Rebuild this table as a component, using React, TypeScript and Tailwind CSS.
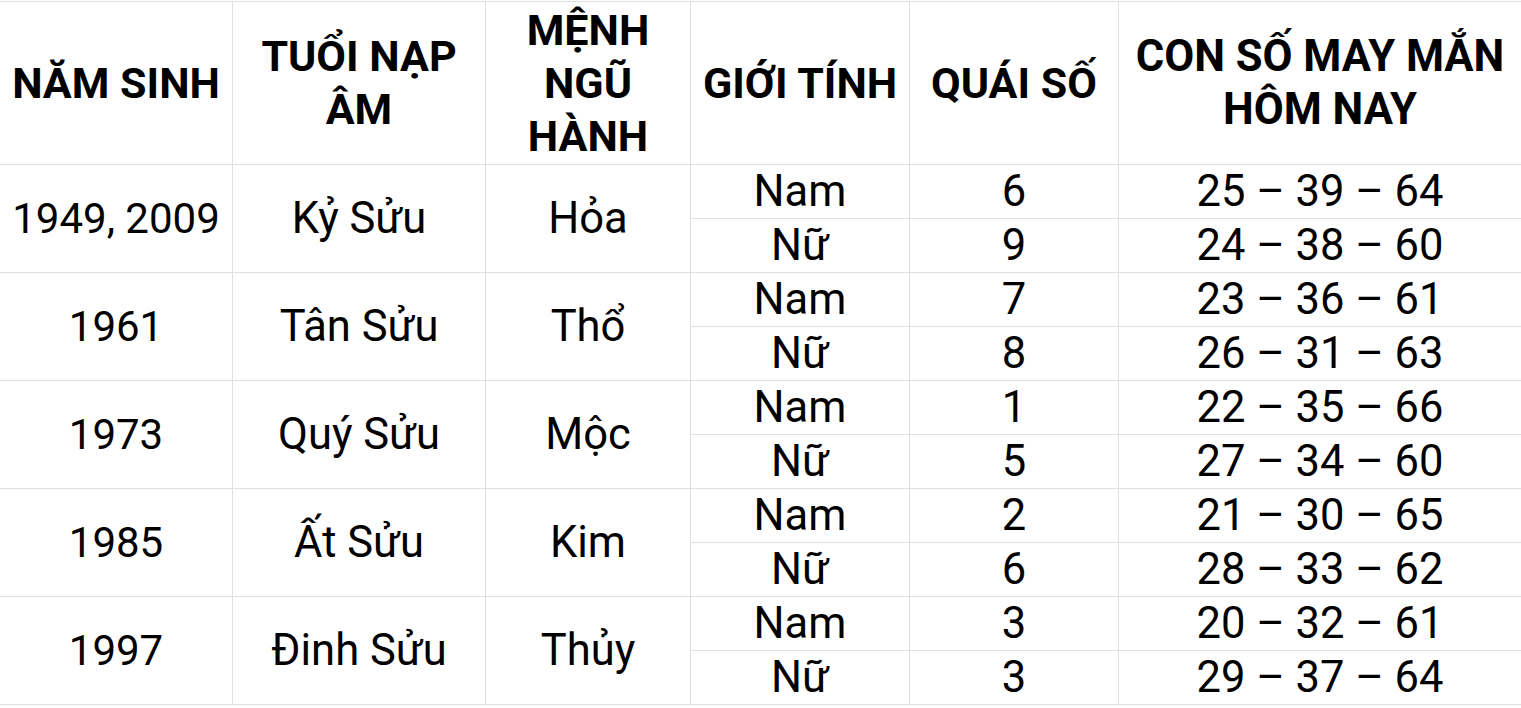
import React from "react";

const rows = [
  { year: "1949, 2009", tuoi: "Kỷ Sửu", menh: "Hỏa", sub: [["Nam", "6", "25 – 39 – 64"], ["Nữ", "9", "24 – 38 – 60"]] },
  { year: "1961", tuoi: "Tân Sửu", menh: "Thổ", sub: [["Nam", "7", "23 – 36 – 61"], ["Nữ", "8", "26 – 31 – 63"]] },
  { year: "1973", tuoi: "Quý Sửu", menh: "Mộc", sub: [["Nam", "1", "22 – 35 – 66"], ["Nữ", "5", "27 – 34 – 60"]] },
  { year: "1985", tuoi: "Ất Sửu", menh: "Kim", sub: [["Nam", "2", "21 – 30 – 65"], ["Nữ", "6", "28 – 33 – 62"]] },
  { year: "1997", tuoi: "Đinh Sửu", menh: "Thủy", sub: [["Nam", "3", "20 – 32 – 61"], ["Nữ", "3", "29 – 37 – 64"]] },
];

const headBase = "flex items-center justify-center text-center h-[163px] border-b border-[#e0e0e0] font-bold leading-[53px]";
const head = `${headBase} text-[43px]`;
const spanBase = "row-span-2 flex items-center justify-center text-center border-b border-[#e0e0e0] whitespace-nowrap";
const span = `${spanBase} text-[43.5px]`;
const sub = "flex items-center justify-center text-center h-[54px] border-b border-[#e0e0e0] text-[43.5px] whitespace-nowrap";

export default function App() {
  return (
    <div className="w-[1521px] h-[708px] bg-white overflow-hidden pt-px text-black" style={{ fontFamily: "Roboto, 'Noto Sans', sans-serif" }}>
      <div className="grid grid-cols-[233px_253px_205px_219px_209px_402px] border-t border-[#e0e0e0]">
        <div className={`${head} border-r`}>NĂM SINH</div>
        <div className={`${head} border-r`}>TUỔI NẠP<br />ÂM</div>
        <div className={`${head} border-r`}>MỆNH<br />NGŨ<br />HÀNH</div>
        <div className={`${head} border-r`}>GIỚI TÍNH</div>
        <div className={`${head} border-r`}>QUÁI SỐ</div>
        <div className={`${headBase} text-[43.5px]`}>CON SỐ MAY MẮN<br />HÔM NAY</div>
        {rows.map((r) => (
          <React.Fragment key={r.year}>
            <div className={`${spanBase} border-r text-[42px]`}>{r.year}</div>
            <div className={`${span} border-r`}>{r.tuoi}</div>
            <div className={`${span} border-r`}>{r.menh}</div>
            <div className={`${sub} border-r`}>{r.sub[0][0]}</div>
            <div className={`${sub} border-r`}>{r.sub[0][1]}</div>
            <div className={sub}>{r.sub[0][2]}</div>
            <div className={`${sub} border-r col-start-4`}>{r.sub[1][0]}</div>
            <div className={`${sub} border-r`}>{r.sub[1][1]}</div>
            <div className={sub}>{r.sub[1][2]}</div>
          </React.Fragment>
        ))}
      </div>
    </div>
  );
}
